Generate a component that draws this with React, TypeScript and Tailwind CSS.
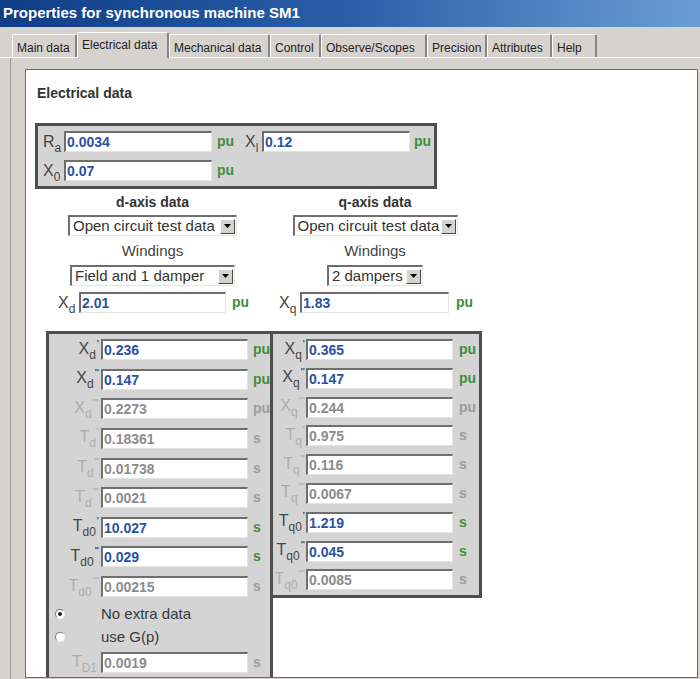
import React from "react";

type Row = { b: string; s: string; p: string; v: string; u: string; on: boolean };

const dRows: Row[] = [
  { b: "X", s: "d", p: "'", v: "0.236", u: "pu", on: true },
  { b: "X", s: "d", p: "''", v: "0.147", u: "pu", on: true },
  { b: "X", s: "d", p: "'''", v: "0.2273", u: "pu", on: false },
  { b: "T", s: "d", p: "'", v: "0.18361", u: "s", on: false },
  { b: "T", s: "d", p: "''", v: "0.01738", u: "s", on: false },
  { b: "T", s: "d", p: "'''", v: "0.0021", u: "s", on: false },
  { b: "T", s: "d0", p: "'", v: "10.027", u: "s", on: true },
  { b: "T", s: "d0", p: "''", v: "0.029", u: "s", on: true },
  { b: "T", s: "d0", p: "'''", v: "0.00215", u: "s", on: false },
];

const qRows: Row[] = [
  { b: "X", s: "q", p: "'", v: "0.365", u: "pu", on: true },
  { b: "X", s: "q", p: "''", v: "0.147", u: "pu", on: true },
  { b: "X", s: "q", p: "'''", v: "0.244", u: "pu", on: false },
  { b: "T", s: "q", p: "'", v: "0.975", u: "s", on: false },
  { b: "T", s: "q", p: "''", v: "0.116", u: "s", on: false },
  { b: "T", s: "q", p: "'''", v: "0.0067", u: "s", on: false },
  { b: "T", s: "q0", p: "'", v: "1.219", u: "s", on: true },
  { b: "T", s: "q0", p: "''", v: "0.045", u: "s", on: true },
  { b: "T", s: "q0", p: "'''", v: "0.0085", u: "s", on: false },
];

const tabs: { t: string; w: string; sel?: boolean }[] = [
  { t: "Main data", w: "w-[65px]" },
  { t: "Electrical data", w: "w-[92px]", sel: true },
  { t: "Mechanical data", w: "w-[101px]" },
  { t: "Control", w: "w-[51px]" },
  { t: "Observe/Scopes", w: "w-[106px]" },
  { t: "Precision", w: "w-[60px]" },
  { t: "Attributes", w: "w-[65px]" },
  { t: "Help", w: "w-[45px]" },
];

function Sym({ b, s, p, on = true }: { b: string; s: string; p?: string; on?: boolean }) {
  return (
    <span
      className={`whitespace-nowrap text-[16px] leading-[21px] ${
        on ? "text-[#454545]" : "text-[#adadad]"
      }`}
    >
      {b}
      <span className="relative top-[5px] text-[12px]">{s}</span>
      {p ? <span className="relative top-[-8px] ml-[1px] text-[9px] font-bold">{p}</span> : null}
    </span>
  );
}

function Val({ v, on, wc }: { v: string; on: boolean; wc: string }) {
  return (
    <div
      className={`${wc} h-[21px] shrink-0 bg-white border-t-2 border-l-2 border-r border-b border-t-[#6e6e6e] border-l-[#6e6e6e] border-r-[#e4e4e4] border-b-[#e4e4e4] pl-[1px] text-[14px] leading-[18px] font-bold ${
        on ? "text-[#2a52a3]" : "text-[#8c8c8c]"
      }`}
    >
      {v}
    </div>
  );
}

function Unit({ u, on, cls = "" }: { u: string; on: boolean; cls?: string }) {
  return (
    <span
      className={`shrink-0 text-[14px] font-bold leading-[21px] ${cls} ${
        on ? "text-[#3f8f3a]" : "text-[#9c9c9c]"
      }`}
    >
      {u}
    </span>
  );
}

function Arrow() {
  return (
    <span className="w-[15px] h-[15px] mr-[1px] shrink-0 bg-[#d6d3ce] border border-t-white border-l-white border-r-[#4a4a4a] border-b-[#4a4a4a] flex items-center justify-center">
      <svg width="7" height="4" viewBox="0 0 7 4">
        <polygon points="0,0 7,0 3.5,4" fill="#000" />
      </svg>
    </span>
  );
}

function Select({ t, wc }: { t: string; wc: string }) {
  return (
    <div
      className={`${wc} h-[21px] bg-white border-t-2 border-l-2 border-r border-b border-t-[#6e6e6e] border-l-[#6e6e6e] border-r-[#e4e4e4] border-b-[#e4e4e4] flex items-center justify-between pl-[3px] text-[15px] leading-[18px] text-[#333]`}
    >
      <span className="whitespace-nowrap">{t}</span>
      <Arrow />
    </div>
  );
}

function Radio({ on }: { on: boolean }) {
  return (
    <span className="ml-[6px] w-[10px] h-[10px] shrink-0 rounded-full bg-white border border-t-[#7a7a7a] border-l-[#7a7a7a] border-r-[#f4f4f4] border-b-[#f4f4f4] flex items-center justify-center">
      {on ? <span className="w-[4px] h-[4px] rounded-full bg-[#222]" /> : null}
    </span>
  );
}

export default function App() {
  return (
    <div className="w-[700px] h-[679px] overflow-hidden bg-[#d6d3ce] font-['Liberation_Sans',Arial,sans-serif] flex flex-col">
      <div className="h-[27px] shrink-0 bg-gradient-to-r from-[#113d88] via-[#2a5fa8] to-[#6b9dd4] flex items-center pl-[3px] text-white font-bold text-[15px]">
        Properties for synchronous machine SM1
      </div>

      <div className="h-[30px] shrink-0 pl-[12px] flex items-end">
        {tabs.map((t) =>
          t.sel ? (
            <div
              key={t.t}
              className={`${t.w} h-[26px] mb-[-1px] relative bg-[#d6d3ce] border-t border-l border-t-white border-l-white border-r-2 border-r-[#858585] rounded-t-[2px] pl-[4px] pt-[5px] text-[12px] leading-[14px] text-[#222] whitespace-nowrap`}
            >
              {t.t}
            </div>
          ) : (
            <div
              key={t.t}
              className={`${t.w} h-[23px] border-t border-l border-t-white border-l-white border-r-2 border-r-[#858585] rounded-t-[2px] pl-[4px] pt-[6px] text-[12px] leading-[14px] text-[#222] whitespace-nowrap`}
            >
              {t.t}
            </div>
          )
        )}
      </div>

      <div className="flex-1 min-h-0 border-t border-t-white pl-[10px]">
        <div className="h-full border-l border-l-[#9c9c9c] pl-[14px] pt-[11px]">
          <div className="w-[673px] h-[609px] border border-[#6c6c6c] bg-white overflow-hidden">
            <div className="mt-[15px] pl-[11px] text-[14px] leading-[16px] font-bold text-[#333]">
              Electrical data
            </div>

            <div className="ml-[9px] mt-[22px] w-[402px] border-[3px] border-[#4e4e4e] bg-[#d4d4d4] pt-[5px] pb-[5px] flex flex-col gap-[8px]">
              <div className="flex items-center h-[21px]">
                <div className="w-[26px] pl-[5px] shrink-0">
                  <Sym b="R" s="a" />
                </div>
                <Val v="0.0034" on wc="w-[148px]" />
                <Unit u="pu" on cls="ml-[5px] w-[28px]" />
                <div className="w-[17px] shrink-0">
                  <Sym b="X" s="l" />
                </div>
                <Val v="0.12" on wc="w-[148px]" />
                <Unit u="pu" on cls="ml-[4px]" />
              </div>
              <div className="flex items-center h-[21px]">
                <div className="w-[26px] pl-[5px] shrink-0">
                  <Sym b="X" s="0" />
                </div>
                <Val v="0.07" on wc="w-[148px]" />
                <Unit u="pu" on cls="ml-[5px]" />
              </div>
            </div>

            <div className="flex mt-[5px] ml-[11px]">
              <div className="w-[231px] flex flex-col items-center">
                <div className="text-[14px] leading-[16px] font-bold text-[#333]">d-axis data</div>
                <div className="mt-[5px]">
                  <Select t="Open circuit test data" wc="w-[169px]" />
                </div>
                <div className="mt-[6px] text-[15px] leading-[17px] text-[#444]">Windings</div>
                <div className="mt-[6px]">
                  <Select t="Field and 1 damper" wc="w-[165px]" />
                </div>
                <div className="mt-[6px] flex items-center h-[21px]">
                  <div className="w-[21px] shrink-0">
                    <Sym b="X" s="d" />
                  </div>
                  <Val v="2.01" on wc="w-[147px]" />
                  <Unit u="pu" on cls="ml-[6px] w-[15px]" />
                </div>
              </div>
              <div className="w-[214px] flex flex-col items-center">
                <div className="text-[14px] leading-[16px] font-bold text-[#333]">q-axis data</div>
                <div className="mt-[5px]">
                  <Select t="Open circuit test data" wc="w-[165px]" />
                </div>
                <div className="mt-[6px] text-[15px] leading-[17px] text-[#444]">Windings</div>
                <div className="mt-[6px]">
                  <Select t="2 dampers" wc="w-[96px]" />
                </div>
                <div className="mt-[6px] flex items-center h-[21px]">
                  <div className="w-[21px] shrink-0">
                    <Sym b="X" s="q" />
                  </div>
                  <Val v="1.83" on wc="w-[149px]" />
                  <Unit u="pu" on cls="ml-[7px] w-[15px]" />
                </div>
              </div>
            </div>

            <div className="flex mt-[18px] ml-[20px] items-start">
              <div className="w-[227px] h-[400px] shrink-0 border-[3px] border-[#4e4e4e] bg-[#d4d4d4] overflow-hidden pt-[5px]">
                <div className="flex flex-col gap-[8.65px]">
                  {dRows.map((r, i) => (
                    <div key={i} className="flex items-center h-[21px]">
                      <div className="w-[52px] shrink-0 flex justify-end pr-[2px]">
                        <Sym b={r.b} s={r.s} p={r.p} on={r.on} />
                      </div>
                      <Val v={r.v} on={r.on} wc="w-[147px]" />
                      <Unit u={r.u} on={r.on} cls="ml-[5px]" />
                    </div>
                  ))}
                </div>
                <div className="mt-[7px] flex items-center h-[20px]">
                  <Radio on />
                  <span className="ml-[36px] text-[15px] text-[#3a3a3a]">No extra data</span>
                </div>
                <div className="mt-[3px] flex items-center h-[20px]">
                  <Radio on={false} />
                  <span className="ml-[36px] text-[15px] text-[#3a3a3a]">use G(p)</span>
                </div>
                <div className="mt-[5px] flex items-center h-[21px]">
                  <div className="w-[52px] shrink-0 flex justify-end pr-[4px]">
                    <Sym b="T" s="D1" on={false} />
                  </div>
                  <Val v="0.0019" on={false} wc="w-[147px]" />
                  <Unit u="s" on={false} cls="ml-[5px]" />
                </div>
              </div>
              <div className="w-[209px] shrink-0 border-y-[3px] border-r-[3px] border-[#4e4e4e] bg-[#d4d4d4] pt-[5px] pb-[5px] flex flex-col gap-[7.8px]">
                {qRows.map((r, i) => (
                  <div key={i} className="flex items-center h-[21px]">
                    <div className="w-[33px] shrink-0 flex justify-end pr-[1px]">
                      <Sym b={r.b} s={r.s} p={r.p} on={r.on} />
                    </div>
                    <Val v={r.v} on={r.on} wc="w-[147px]" />
                    <Unit u={r.u} on={r.on} cls="ml-[6px]" />
                  </div>
                ))}
              </div>
            </div>
          </div>
        </div>
      </div>
    </div>
  );
}
